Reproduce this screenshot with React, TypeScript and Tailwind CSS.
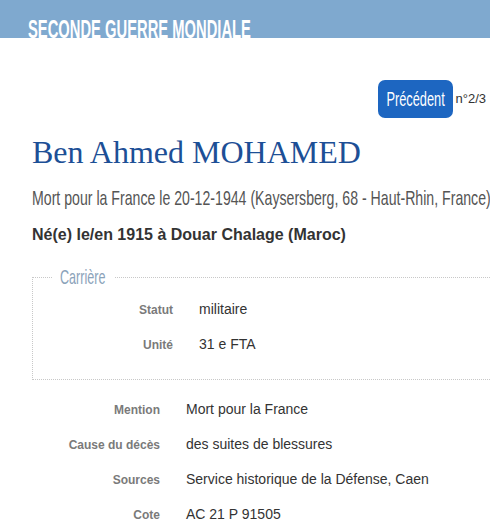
function Narrow({ children, scale, className = "" }: { children: React.ReactNode; scale: string; className?: string }) {
  return <span className={`inline-block whitespace-nowrap ${scale} ${className}`}>{children}</span>;
}

function Row({ label, value, labelWidth }: { label: string; value: string; labelWidth: string }) {
  return (
    <div className="flex items-baseline h-[35px]">
      <span className={`${labelWidth} shrink-0 text-right text-[12px] font-bold text-[#7a7a7a]`}>{label}</span>
      <span className="ml-[26px] text-[14px] text-[#333]">{value}</span>
    </div>
  );
}

export default function App() {
  return (
    <div className="w-[490px] h-[530px] overflow-hidden bg-white font-['Liberation_Sans',Arial,sans-serif]">
      <div className="h-[38px] overflow-hidden bg-[#7fa9cf] pl-[28px] pt-[17px]">
        <Narrow scale="origin-left scale-x-[0.59]" className="text-[25px] font-bold leading-[25px] text-white">
          SECONDE GUERRE MONDIALE
        </Narrow>
      </div>

      <div className="mt-[42px] flex items-center justify-end pr-[4px]">
        <button
          type="button"
          className="flex h-[38px] w-[75px] items-center justify-center overflow-visible rounded-[7px] bg-[#1d66c1] text-[20px] text-white"
        >
          <Narrow scale="origin-center scale-x-[0.64]">Précédent</Narrow>
        </button>
        <span className="ml-[2px] text-[13px] text-[#333]">n°2/3</span>
      </div>

      <div className="pl-[32px]">
        <h2 className="mt-[14px] whitespace-nowrap font-['Liberation_Serif',serif] text-[32px] leading-[40px] text-[#1d4f96]">
          Ben Ahmed MOHAMED
        </h2>
        <p className="mt-[14px] h-[24px] text-[21px] leading-[24px] text-[#555]">
          <Narrow scale="origin-left scale-x-[0.673]">
            Mort pour la France le 20-12-1944 (Kaysersberg, 68 - Haut-Rhin, France)
          </Narrow>
        </p>
        <p className="mt-[15px] whitespace-nowrap text-[16px] font-bold leading-[20px] text-[#333]">
          Né(e) le/en 1915 à Douar Chalage (Maroc)
        </p>

        <fieldset className="mt-[22px] w-[500px] border border-dotted border-[#c8c8c8] pb-[10px] pt-[12px]">
          <legend className="ml-[20px] px-[7px] text-[21px] leading-[20px] text-[#8ba3ba]">
            <span className="inline-block w-[48px]">
              <Narrow scale="origin-left scale-x-[0.6]">Carrière</Narrow>
            </span>
          </legend>
          <Row label="Statut" value="militaire" labelWidth="w-[140px]" />
          <Row label="Unité" value="31 e FTA" labelWidth="w-[140px]" />
        </fieldset>

        <div className="mt-[19px]">
          <Row label="Mention" value="Mort pour la France" labelWidth="w-[128px]" />
          <Row label="Cause du décès" value="des suites de blessures" labelWidth="w-[128px]" />
          <Row label="Sources" value="Service historique de la Défense, Caen" labelWidth="w-[128px]" />
          <Row label="Cote" value="AC 21 P 91505" labelWidth="w-[128px]" />
        </div>
      </div>
    </div>
  );
}
